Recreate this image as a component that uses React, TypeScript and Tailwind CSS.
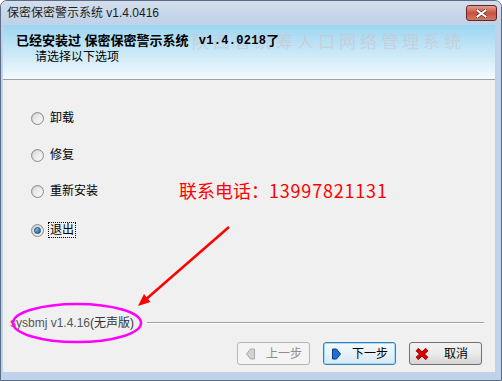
import * as React from 'react';

function Radio({ label, checked, focus }: { label: string; checked?: boolean; focus?: boolean }) {
  return (
    <div className="flex items-center h-4">
      <span className="w-[13px] h-[13px] rounded-full border border-[#8d8d8d] bg-linear-to-br from-[#c9c9c9] to-[#f6f6f6] flex items-center justify-center">
        {checked ? (
          <span className="w-[7px] h-[7px] rounded-full border border-[#1b4f7e] bg-linear-to-br from-[#8fd0f7] to-[#0b5a9c]" />
        ) : (
          <span className="w-[9px] h-[9px] rounded-full bg-linear-to-br from-[#dcdcdc] to-[#fbfbfb]" />
        )}
      </span>
      <span className={`ml-[5px] text-[12px] leading-[14px] text-black ${focus ? 'outline outline-dotted outline-1 outline-black px-px' : 'px-px'}`}>
        {label}
      </span>
    </div>
  );
}

function Btn({ icon, label, kind }: { icon: React.ReactNode; label: string; kind: 'disabled' | 'default' | 'normal' }) {
  const look =
    kind === 'disabled'
      ? 'border-[#b5b5b5] bg-[#f4f4f4] text-[#8c8c8c]'
      : kind === 'default'
      ? 'border-[#3c7fb1] bg-linear-to-b from-[#f4fafe] to-[#d9e8f3] text-black shadow-[inset_0_0_0_1px_#9fdcfb]'
      : 'border-[#707070] bg-linear-to-b from-[#f2f2f2] via-[#ebebeb] to-[#d5d5d5] text-black';
  return (
    <div className={`w-[73px] h-[23px] rounded-[3px] border flex items-center ${look}`}>
      {icon}
      <span className="text-[12px] leading-[14px]">{label}</span>
    </div>
  );
}

export default function App() {
  return (
    <div className="relative w-[502px] h-[381px] overflow-hidden rounded-t-[7px] border border-[#5b6d84] bg-[#bfd2e9] flex flex-col font-['Liberation_Sans','Noto_Sans_CJK_SC',sans-serif]">
      {/* title bar */}
      <div className="h-[24px] flex items-center pl-[6px] pr-[4px] bg-linear-to-b from-[#d3deed] to-[#bed1e8]">
        <span className="text-[12px] text-[#1c1c1c]">保密保密警示系统 v1.4.0416</span>
        <div className="ml-auto w-[31px] h-[16px] rounded-[3px] border border-[#6b2320] bg-linear-to-b from-[#e3a090] via-[#c8503f] to-[#d2775f] flex items-center justify-center">
          <svg width="11" height="9" viewBox="0 0 11 9">
            <path d="M1.5 1.5 L9.5 7.5 M9.5 1.5 L1.5 7.5" stroke="#5a2a25" strokeWidth="3.4" strokeLinecap="square" />
            <path d="M1.5 1.5 L9.5 7.5 M9.5 1.5 L1.5 7.5" stroke="#ffffff" strokeWidth="2" strokeLinecap="square" />
          </svg>
        </div>
      </div>

      <div className="flex-1 ml-[2px] mr-[6px] mb-[8px] flex flex-col">
        {/* header */}
        <div className="relative h-[55px] border-b border-[#a0a0a0] bg-linear-to-b from-[#9cd5f0] to-[#f3fafd] pt-[8px] pl-[13px]">
          <div className="absolute left-[189px] top-[8px] text-[17px] leading-[20px] tracking-[4px] text-[#cfc2cb]/60 whitespace-nowrap">
            陕西省统筹人口网络管理系统
          </div>
          <div className="relative h-4 flex items-center text-[13px] font-bold text-black whitespace-nowrap">
            <span>已经安装过 保密保密警示系统</span>
            <span className="font-['Liberation_Mono',monospace] text-[12px] ml-[10px] tracking-[0.3px]">v1.4.0218</span>
            <span>了</span>
          </div>
          <div className="h-4 flex items-center ml-[19px] text-[12px] text-black">请选择以下选项</div>
        </div>

        {/* body */}
        <div className="flex-1 bg-[#f0f0f0] flex flex-col pt-[30px] pb-[7px]">
          <div className="pl-[28px] flex flex-col">
            <Radio label="卸载" />
            <div className="mt-[21px]">
              <Radio label="修复" />
            </div>
            <div className="mt-[20px]">
              <Radio label="重新安装" />
            </div>
            <div className="mt-[23px]">
              <Radio label="退出" checked focus />
            </div>
          </div>

          <div className="mt-auto h-4 flex items-center pl-[7px]">
            <span className="text-[12px] text-[#555555] whitespace-nowrap">
              sysbmj v1.4.16<span className="text-[#333333]">(无声版)</span>
            </span>
            <div className="flex-1 ml-[13px] mr-[11px] h-[2px] border-t border-[#a0a0a0] border-b border-b-white" />
          </div>

          <div className="mt-[11px] flex justify-end gap-[13px] pr-[13px]">
            <Btn
              kind="disabled"
              label="上一步"
              icon={
                <svg className="ml-[8px] mr-[11px]" width="9" height="12" viewBox="0 0 9 12">
                  <path d="M0.5 6 L4.5 1 L8.5 1 L8.5 11 L4.5 11 Z" fill="#d2d2d2" stroke="#a8a8a8" />
                </svg>
              }
            />
            <Btn
              kind="default"
              label="下一步"
              icon={
                <svg className="ml-[8px] mr-[11px]" width="9" height="12" viewBox="0 0 9 12">
                  <path d="M0.5 1 L4.5 1 L8.5 6 L4.5 11 L0.5 11 Z" fill="#1f6fd1" stroke="#0b3a8c" />
                </svg>
              }
            />
            <Btn
              kind="normal"
              label="取消"
              icon={
                <svg className="ml-[5px] mr-[15px]" width="14" height="12" viewBox="0 0 14 12">
                  <path d="M2 1.5 L12 10.5 M12 1.5 L2 10.5" stroke="#7a0000" strokeWidth="4" />
                  <path d="M2 1.5 L12 10.5 M12 1.5 L2 10.5" stroke="#e00000" strokeWidth="2.6" />
                </svg>
              }
            />
          </div>
        </div>
      </div>

      {/* annotations */}
      <div className="absolute left-[178px] top-[177px] text-[18px] leading-[24px] text-[#ff0000] font-['Noto_Sans_CJK_SC',sans-serif] whitespace-nowrap">
        联系电话：<span className="tracking-[0.8px]">13997821131</span>
      </div>
      <svg className="absolute left-0 top-0 pointer-events-none" width="502" height="381" viewBox="0 0 502 381">
        <line x1="228" y1="226" x2="143" y2="300" stroke="#ff0000" strokeWidth="2.5" />
        <polygon points="137,305 149.5,301 143,293" fill="#ff0000" />
        <ellipse cx="76" cy="322" rx="64" ry="19" fill="none" stroke="#ff00ff" strokeWidth="2.5" />
      </svg>
    </div>
  );
}
